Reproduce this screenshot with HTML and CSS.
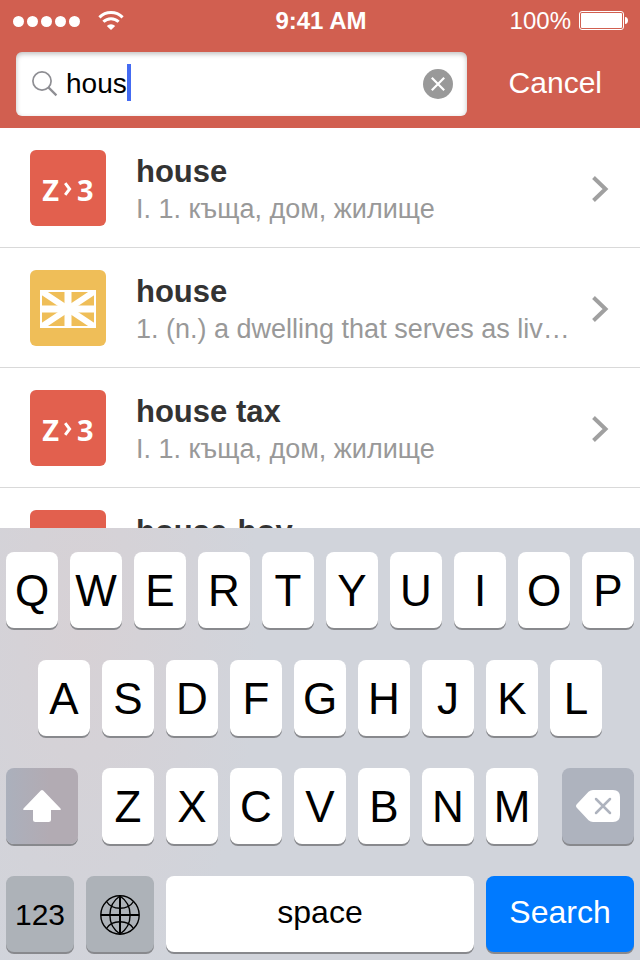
FILE: index.html
```
<!DOCTYPE html>
<html lang="en">
<head>
    <meta charset="UTF-8">
    <meta name="viewport" content="width=device-width, initial-scale=1.0">
    <title>Dictionary - Search</title>
    <link rel="stylesheet" href="styles.css">
</head>
<body>
    <header class="header">
        <div class="status-bar">
            <div class="status-left">
                <div class="signal"><i></i><i></i><i></i><i></i><i></i></div>
                <svg width="26" height="20" viewBox="0 0 26 20" fill="none" stroke="#fff" stroke-width="3">
                    <path d="M1.4 6.4a16.4 16.4 0 0 1 23.2 0"/>
                    <path d="M5.4 10.8a10.8 10.8 0 0 1 15.2 0"/>
                    <path d="M13 19l-4.2-4.1a6 6 0 0 1 8.4 0z" fill="#fff" stroke="none"/>
                </svg>
            </div>
            <div class="status-time">9:41 AM</div>
            <div class="status-right">
                <span>100%</span>
                <svg width="50" height="20" viewBox="0 0 50 20">
                    <rect x=".5" y=".5" width="44" height="18" rx="2.5" fill="none" stroke="#fff"/>
                    <rect x="2" y="2" width="41" height="15" rx="1" fill="#fff"/>
                    <path d="M46 6c4 0 4 7 0 7z" fill="#fff"/>
                </svg>
            </div>
        </div>

        <form class="search-bar">
            <div class="search-field">
                <svg width="26" height="26" viewBox="0 0 26 26" fill="none" stroke="#8e8e93" stroke-width="1.7">
                    <circle cx="10" cy="10" r="9.1"/>
                    <path d="M16.4 16.4l8 8" stroke-width="2.2"/>
                </svg>
                <div class="search-text">
                    <input type="text" class="search-input" value="hous" aria-label="Search">
                    <span class="caret"></span>
                </div>
                <button type="button" class="clear-button" aria-label="Clear">
                    <svg width="30" height="30" viewBox="0 0 30 30">
                        <circle cx="15" cy="15" r="15" fill="#999"/>
                        <path d="M8.8 8.8l12.4 12.4M21.2 8.8L8.8 21.2" stroke="#fff" stroke-width="2.2"/>
                    </svg>
                </button>
            </div>
            <button type="button" class="cancel-button">Cancel</button>
        </form>
    </header>

    <ul class="results">
        <li>
            <a href="#" class="result">
                <span class="tile red">Z<svg width="8" height="14" viewBox="0 0 8 14" fill="none" stroke="#fff" stroke-width="3"><path d="M1.2 1.2L5.6 7l-4.4 5.8"/></svg>3</span>
                <span class="result-text">
                    <span class="word">house</span>
                    <span class="meaning">I. 1. къща, дом, жилище</span>
                </span>
                <svg class="chevron" width="18" height="26" viewBox="0 0 18 26"><path d="M1.500 1.500L13.500 13l-12 11.500"/></svg>
            </a>
        </li>
        <li>
            <a href="#" class="result">
                <span class="tile yellow">
                    <svg width="56" height="38" viewBox="0 0 56 38" fill="none" stroke="#fff">
                        <rect x="1" y="1" width="54" height="36" stroke-width="2"/>
                        <path d="M1 1l54 36M55 1L1 37" stroke-width="6"/>
                        <path d="M28 0v38M0 19h56" stroke-width="7"/>
                    </svg>
                </span>
                <span class="result-text">
                    <span class="word">house</span>
                    <span class="meaning">1. (n.) a dwelling that serves as liv…</span>
                </span>
                <svg class="chevron" width="18" height="26" viewBox="0 0 18 26"><path d="M1.500 1.500L13.500 13l-12 11.500"/></svg>
            </a>
        </li>
        <li>
            <a href="#" class="result">
                <span class="tile red">Z<svg width="8" height="14" viewBox="0 0 8 14" fill="none" stroke="#fff" stroke-width="3"><path d="M1.2 1.2L5.6 7l-4.4 5.8"/></svg>3</span>
                <span class="result-text">
                    <span class="word">house tax</span>
                    <span class="meaning">I. 1. къща, дом, жилище</span>
                </span>
                <svg class="chevron" width="18" height="26" viewBox="0 0 18 26"><path d="M1.500 1.500L13.500 13l-12 11.500"/></svg>
            </a>
        </li>
        <li>
            <a href="#" class="result">
                <span class="tile red"></span>
                <span class="result-text">
                    <span class="word">house-boy</span>
                    <span class="meaning"></span>
                </span>
            </a>
        </li>
    </ul>

    <div class="keyboard">
        <div class="key-row">
            <button class="key">Q</button>
            <button class="key">W</button>
            <button class="key">E</button>
            <button class="key">R</button>
            <button class="key">T</button>
            <button class="key">Y</button>
            <button class="key">U</button>
            <button class="key">I</button>
            <button class="key">O</button>
            <button class="key">P</button>
        </div>
        <div class="key-row middle">
            <button class="key">A</button>
            <button class="key">S</button>
            <button class="key">D</button>
            <button class="key">F</button>
            <button class="key">G</button>
            <button class="key">H</button>
            <button class="key">J</button>
            <button class="key">K</button>
            <button class="key">L</button>
        </div>
        <div class="key-row letters">
            <button class="key side shift" aria-label="Shift">
                <svg width="38" height="32" viewBox="0 0 38 32" fill="#fff">
                    <path d="M19 0q.6 0 1.2.6l17.3 18q.8 1.4-.8 1.4H28v9.5q0 2.5-2.5 2.5h-13Q10 32 10 29.5V20H1.3q-1.6 0-.8-1.4L17.8.6Q18.4 0 19 0z"/>
                </svg>
            </button>
            <div class="key-row letter-group">
                <button class="key">Z</button>
                <button class="key">X</button>
                <button class="key">C</button>
                <button class="key">V</button>
                <button class="key">B</button>
                <button class="key">N</button>
                <button class="key">M</button>
            </div>
            <button class="key side" aria-label="Delete">
                <svg width="44" height="32" viewBox="0 0 44 32">
                    <path d="M17 0h20q7 0 7 7v18q0 7-7 7H17q-2.5 0-4.5-1.8L1 18q-2-2 0-4L12.5 1.8Q14.5 0 17 0z" fill="#fff"/>
                    <path d="M20 9l14 14M34 9L20 23" stroke="#aeb3be" stroke-width="2.5" stroke-linecap="round"/>
                </svg>
            </button>
        </div>
        <div class="key-row">
            <button class="key mode numbers">123</button>
            <button class="key mode" aria-label="Next keyboard">
                <svg width="40" height="40" viewBox="0 0 40 40" fill="none" stroke="#000" stroke-width="1.4">
                    <circle cx="20" cy="20" r="19.2"/>
                    <path d="M20 1v38M1 20h38" stroke-width="2"/>
                    <path d="M20 1C6.5 10 6.5 30 20 39M20 1c13.5 9 13.5 29 0 38"/>
                    <path d="M6.5 6.5C12 15.5 28 15.5 33.5 6.5M6.5 33.5C12 24.5 28 24.5 33.5 33.5"/>
                </svg>
            </button>
            <button class="key space">space</button>
            <button class="key go">Search</button>
        </div>
    </div>
</body>
</html>
```
FILE: styles.css
```
* {
    margin: 0;
    padding: 0;
    box-sizing: border-box;
    font-family: "Liberation Sans", Arial, sans-serif;
}

body {
    display: flex;
    flex-direction: column;
    height: 100vh;
    background-color: #fff;
}

svg {
    display: block;
    flex: none;
}

button {
    border: none;
    background: none;
    cursor: pointer;
}

/* header */

.header {
    flex: none;
    background-color: #d15f50;
    color: #fff;
}

.status-bar {
    display: grid;
    grid-template-columns: 1fr auto 1fr;
    align-items: center;
    height: 40px;
    padding: 2px 11px 0 13px;
    font-size: 24px;
}

.status-left {
    display: flex;
    align-items: center;
    gap: 18px;
}

.signal {
    display: flex;
    gap: 3px;
}

.signal i {
    width: 11px;
    height: 11px;
    border-radius: 50%;
    background-color: #fff;
}

.status-time {
    font-weight: bold;
}

.status-right {
    display: flex;
    align-items: center;
    justify-content: flex-end;
    gap: 8px;
}

.search-bar {
    display: flex;
    align-items: center;
    gap: 42px;
    padding: 12px 38px 12px 16px;
}

.search-field {
    flex: 1;
    min-width: 0;
    display: flex;
    align-items: center;
    gap: 8px;
    height: 64px;
    padding: 0 14px 0 16px;
    background-color: #fff;
    border-radius: 6px;
    box-shadow: inset 0 2px 5px rgba(0, 0, 0, 0.25);
}

.search-text {
    position: relative;
    flex: 1;
    min-width: 0;
}

.search-input {
    width: 100%;
    height: 40px;
    border: none;
    outline: none;
    background: none;
    color: #000;
    font-size: 28px;
}

.caret {
    position: absolute;
    left: 61px;
    top: 0;
    width: 4px;
    height: 37px;
    background-color: #446bf2;
}

.cancel-button {
    padding-bottom: 2px;
    color: #fff;
    font-size: 30px;
}

/* results */

.results {
    flex: 1;
    min-height: 0;
    overflow: hidden;
    list-style: none;
}

.result {
    display: flex;
    align-items: center;
    height: 120px;
    padding: 1px 30px 0;
    border-bottom: 1px solid #d9d9d9;
    text-decoration: none;
}

.tile {
    flex: none;
    display: flex;
    align-items: center;
    justify-content: center;
    gap: 5px;
    width: 76px;
    height: 76px;
    padding-top: 2px;
    border-radius: 6px;
    color: #fff;
    font: bold 29px "Open Sans", "Noto Sans", sans-serif;
}

.tile.red {
    background-color: #e2604e;
}

.tile.yellow {
    background-color: #efbe58;
}

.result-text {
    flex: 1;
    min-width: 0;
    margin: 0 16px 0 30px;
    padding-top: 2px;
}

.word,
.meaning {
    display: block;
    overflow: hidden;
    white-space: nowrap;
    text-overflow: ellipsis;
}

.word {
    height: 40px;
    line-height: 40px;
    color: #333;
    font-size: 31px;
    font-weight: bold;
}

.meaning {
    height: 34px;
    line-height: 34px;
    color: #999;
    font-size: 27px;
}

.chevron {
    margin-top: 2px;
    fill: none;
    stroke: #a0a0a0;
    stroke-width: 4;
}

/* keyboard */

.keyboard {
    flex: none;
    display: flex;
    flex-direction: column;
    gap: 32px;
    padding: 24px 6px 8px;
    background: radial-gradient(ellipse 180px 380px at 80px 100px, #d7d1d5, #d1d4db);
}

.key-row {
    display: flex;
    gap: 12px;
}

.key-row.middle {
    padding: 0 32px;
}

.key-row.letters {
    gap: 24px;
}

.letter-group {
    flex: 1;
}

.key {
    flex: 1;
    min-width: 0;
    display: flex;
    align-items: center;
    justify-content: center;
    height: 76px;
    padding-top: 2px;
    background-color: #fff;
    border-radius: 8px;
    box-shadow: 0 2px 0 #88898d;
    color: #000;
    font-size: 44px;
}

.key.side {
    flex: 0 0 72px;
    padding-top: 0;
    background-color: #aeb3be;
}

.key.shift {
    background: linear-gradient(to right, #abb0bc, #b2abb3 60%);
}

.key.mode {
    flex: 0 0 68px;
    background-color: #adb2b8;
}

.key.numbers {
    font-size: 30px;
}

.key.space,
.key.go {
    padding: 0 0 4px;
    font-size: 32px;
}

.key.go {
    flex: 0 0 148px;
    background-color: #007aff;
    color: #fff;
}
```
